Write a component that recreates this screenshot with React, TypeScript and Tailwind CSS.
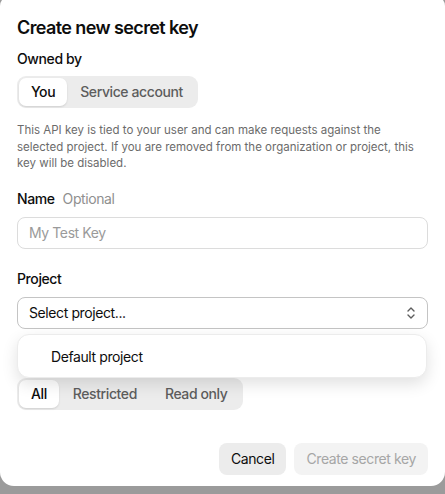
import React from "react";

function Chevrons() {
  return (
    <svg width="10" height="14" viewBox="0 0 10 14" fill="none" stroke="#5d5d5d" strokeWidth="1.4" strokeLinecap="round" strokeLinejoin="round">
      <path d="M2 5 L5 2 L8 5" />
      <path d="M2 9 L5 12 L8 9" />
    </svg>
  );
}

export default function App() {
  return (
    <div className="w-[445px] h-[494px] bg-[#9b9b9b] overflow-hidden" style={{ fontFamily: "Inter, 'Noto Sans', sans-serif" }}>
      <div className="relative bg-white h-[490px] -mt-[4px] pt-[4px] rounded-t-[10px] rounded-b-[14px] px-[17px] text-[#0d0d0d] tracking-[-0.4px]">
        <div className="pt-[16px] text-[18px] leading-[24px] font-semibold tracking-[-0.6px]">Create new secret key</div>
        <div className="mt-[9px] text-[14px] leading-[20px] font-medium">Owned by</div>
        <div className="mt-[7px] inline-flex p-[2px] bg-[#ececec] rounded-[9px] text-[14px] leading-[20px] font-medium">
          <div className="px-[12px] py-[4px] bg-white rounded-[7px] shadow-[0_1px_2px_rgba(0,0,0,0.12)]">You</div>
          <div className="px-[13px] py-[4px] text-[#5d5d5d]">Service account</div>
        </div>
        <p className="mt-[14px] w-[404px] text-[11.5px] leading-[16.5px] text-[#6b6b6b] tracking-[0px]">
          This API key is tied to your user and can make requests against the selected project. If you are removed from the organization or project, this key will be disabled.
        </p>
        <div className="mt-[17px] text-[14px] leading-[20px] flex gap-[8px]">
          <span className="font-medium">Name</span>
          <span className="text-[#8f8f8f]">Optional</span>
        </div>
        <div className="mt-[8px] h-[32px] border border-[#dcdcdc] rounded-[8px] flex items-center px-[11px] text-[14px] text-[#9a9a9a]">
          My Test Key
        </div>
        <div className="mt-[20px] text-[14px] leading-[20px] font-medium">Project</div>
        <div className="mt-[8px] h-[32px] border border-[#c4c4c4] rounded-[8px] flex items-center justify-between pl-[11px] pr-[11px] text-[14px]">
          <span>Select project...</span>
          <Chevrons />
        </div>
        <div className="mt-[20px] h-[20px]" />
        <div className="mt-[9px] inline-flex p-[2px] bg-[#ececec] rounded-[9px] text-[14px] leading-[20px] font-medium">
          <div className="px-[12px] py-[4px] bg-white rounded-[7px] shadow-[0_1px_2px_rgba(0,0,0,0.12)]">All</div>
          <div className="px-[14px] py-[4px] text-[#5d5d5d]">Restricted</div>
          <div className="px-[14px] py-[4px] text-[#5d5d5d]">Read only</div>
        </div>
        <div className="mt-[33px] flex justify-end gap-[8px] text-[14px]">
          <div className="h-[32px] px-[12px] rounded-[8px] bg-[#ececec] flex items-center">Cancel</div>
          <div className="h-[32px] px-[12px] rounded-[8px] bg-[#f3f3f3] text-[#a6a6a6] flex items-center">Create secret key</div>
        </div>
        <div className="absolute left-[17px] right-[18px] top-[338px] h-[44px] bg-white rounded-[12px] border border-[#ececec] shadow-[0_6px_16px_rgba(0,0,0,0.12)] flex items-center pl-[33px] text-[14px]">
          Default project
        </div>
      </div>
    </div>
  );
}
